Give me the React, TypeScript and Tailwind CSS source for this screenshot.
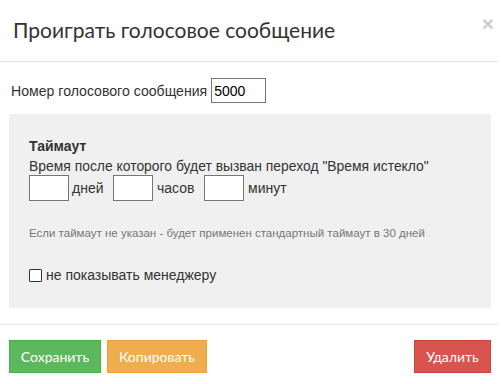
import React from "react";

export default function App() {
  const sans = { fontFamily: '"Liberation Sans", Arial, sans-serif' };
  const lato = { fontFamily: 'Lato, "Open Sans", sans-serif' };
  return (
    <div className="w-[501px] h-[384px] bg-white text-[#333]" style={sans}>
      <div className="w-[498px]">
        {/* header */}
        <div className="relative h-[62px] border-b border-[#e5e5e5] flex items-center pl-[13px]">
          <h4 className="text-[21px] leading-[24px] text-[#333] font-normal mt-[-1px]" style={lato}>
            Проиграть голосовое сообщение
          </h4>
          <span
            className="absolute right-[4px] top-[13px] text-[21px] font-bold leading-none text-black opacity-20"
            style={sans}
          >
            ×
          </span>
        </div>

        {/* body */}
        <div className="pt-[16px]">
          <div className="flex items-center pl-[11px] text-[14px] leading-[20px]">
            <span className="text-[14.1px]">Номер голосового сообщения</span>
            <input
              defaultValue="5000"
              className="ml-[4px] w-[55px] h-[25px] border border-[#767676] px-[2px] text-[14px] text-black outline-none bg-white"
              style={sans}
            />
          </div>

          <div className="ml-[9px] mt-[11px] w-[482px] h-[194px] bg-[#f0f0f0] pl-[20px] pt-[22px] text-[14px] leading-[20px]">
            <div className="font-bold text-[#333]">Таймаут</div>
            <div className="text-[13.9px]">Время после которого будет вызван переход "Время истекло"</div>
            <div className="flex items-center mt-[-1px]">
              <input className="w-[40px] h-[26px] border border-[#767676] bg-white outline-none" />
              <span className="w-[44px] pl-[3px]">дней</span>
              <input className="w-[40px] h-[26px] border border-[#767676] bg-white outline-none" />
              <span className="w-[51px] pl-[4px]">часов</span>
              <input className="w-[40px] h-[26px] border border-[#767676] bg-white outline-none" />
              <span className="pl-[4px]">минут</span>
            </div>
            <div className="mt-[24px] text-[11.5px] leading-[16px] text-[#777]">
              Если таймаут не указан - будет применен стандартный таймаут в 30 дней
            </div>
            <div className="mt-[24px] flex items-center">
              <span className="w-[13px] h-[13px] border border-[#333] bg-white rounded-[1px]" />
              <span className="ml-[4px]">не показывать менеджеру</span>
            </div>
          </div>
        </div>

        {/* footer */}
        <div className="mt-[16px] border-t border-[#e5e5e5] pt-[15px] px-[9px] flex items-center">
          <button
            className="w-[92px] h-[33px] bg-[#5cb85c] border border-[#4cae4c] text-white text-[14px]"
            style={lato}
          >
            Сохранить
          </button>
          <button
            className="ml-[6px] w-[100px] h-[33px] bg-[#f0ad4e] border border-[#eea236] text-white text-[14px]"
            style={lato}
          >
            Копировать
          </button>
          <div className="flex-1" />
          <button
            className="mr-[-2px] w-[77px] h-[33px] bg-[#d9534f] border border-[#d43f3a] text-white text-[14px]"
            style={lato}
          >
            Удалить
          </button>
        </div>
      </div>
    </div>
  );
}
